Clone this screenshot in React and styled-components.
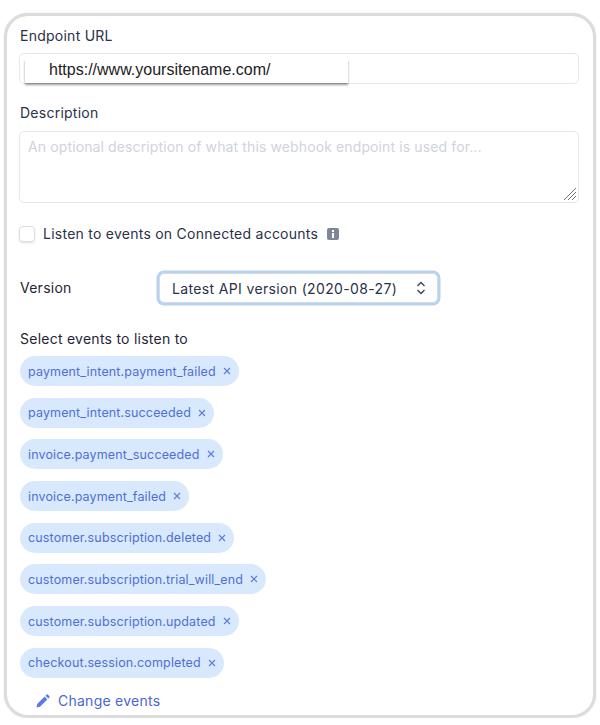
import React from "react";
import styled, { createGlobalStyle } from "styled-components";

const Global = createGlobalStyle`
    html, body { margin:0; padding:0; background:#fff; }
    body { font-family:"Inter", "Liberation Sans", sans-serif; color:#2a3148; }
    * { box-sizing:border-box; }
`;

const Card = styled.div`
    width:592px;
    height:705px;
    margin:13px 0 0 4px;
    padding:10px 14px 0 12px;
    border:3px solid #dcdcdc;
    border-radius:24px;
    box-shadow:0 0 2px rgba(0,0,0,0.12);
    background:#fff;
    overflow:hidden;
`;

const Label = styled.div`
    font-size:14px;
    line-height:20px;
    letter-spacing:0.25px;
    margin-left:1px;
    color:${p => p.$dark ? "#1f2636" : "#2a3148"};
`;

const UrlField = styled.div`
    position:relative;
    height:31px;
    margin-top:7px;
    border:1px solid #e6e7ea;
    border-radius:5px;
`;

const UrlMask = styled.div`
    position:absolute;
    left:5px;
    top:5px;
    width:323px;
    height:24px;
    padding-left:24px;
    background:#fff;
    box-shadow:0 2px 2px rgba(0,0,0,0.4);
    font-family:"Liberation Sans", Arial, sans-serif;
    font-size:16px;
    line-height:22px;
    color:#222;
`;

const DescLabel = styled(Label)`
    margin-top:19px;
`;

const TextArea = styled.div`
    position:relative;
    height:72px;
    margin-top:8px;
    padding:5px 8px;
    border:1px solid #e6e7ea;
    border-radius:5px;
    font-size:14px;
    line-height:20px;
    letter-spacing:0.12px;
    color:#d0d3dc;
`;

const Grip = styled.svg`
    position:absolute;
    right:1px;
    bottom:1px;
`;

const CheckRow = styled.div`
    display:flex;
    align-items:center;
    margin-top:22px;
    height:18px;
`;

const Box = styled.span`
    width:16px;
    height:16px;
    border:1px solid #dcdee3;
    border-radius:4px;
    box-shadow:0 1px 2px rgba(0,0,0,0.14);
    margin-right:7px;
`;

const InfoIcon = styled.svg`
    margin-left:9px;
`;

const VersionRow = styled.div`
    display:flex;
    align-items:center;
    margin-top:30px;
`;

const VersionLabel = styled(Label)`
    width:138px;
`;

const Select = styled.div`
    display:flex;
    align-items:center;
    justify-content:space-between;
    width:279px;
    height:30px;
    margin-left:1px;
    padding:0 11px 0 12px;
    border-radius:5px;
    background:#fff;
    border:1px solid #d4dbe6;
    box-shadow:0 0 0 2.5px #b5d2ee;
    font-size:14px;
    letter-spacing:0.35px;
    color:#2a3148;
`;

const EventsLabel = styled(Label)`
    margin-top:26px;
`;

const Pills = styled.div`
    display:flex;
    flex-direction:column;
    align-items:flex-start;
    gap:11.7px;
    margin:7px 0 0 1px;
`;

const Pill = styled.div`
    display:flex;
    align-items:center;
    height:30px;
    padding:0 8px;
    border-radius:15px;
    background:#d9e9fd;
    color:#4f6fd6;
    font-size:12.5px;
    letter-spacing:0.14px;
`;

const Close = styled.svg`
    margin-left:7px;
`;

const ChangeLink = styled.div`
    display:flex;
    align-items:center;
    margin:13px 0 0 17px;
    height:20px;
    font-size:14px;
    letter-spacing:0.25px;
    color:#4a66d4;
`;

const PencilIcon = styled.svg`
    margin-right:8px;
`;

const events = [
    "payment_intent.payment_failed",
    "payment_intent.succeeded",
    "invoice.payment_succeeded",
    "invoice.payment_failed",
    "customer.subscription.deleted",
    "customer.subscription.trial_will_end",
    "customer.subscription.updated",
    "checkout.session.completed",
];

export default function App() {
    return (
        <>
            <Global />
            <Card>
                <Label>Endpoint URL</Label>
                <UrlField>
                    <UrlMask>https://www.yoursitename.com/</UrlMask>
                </UrlField>
                <DescLabel>Description</DescLabel>
                <TextArea>
                    An optional description of what this webhook endpoint is used for...
                    <Grip width="14" height="14" viewBox="0 0 14 14" stroke="#777" strokeWidth="1">
                        <path d="M13 1 1 13M13 5 5 13M13 9 9 13" />
                    </Grip>
                </TextArea>
                <CheckRow>
                    <Box />
                    <Label>Listen to events on Connected accounts</Label>
                    <InfoIcon width="12" height="12" viewBox="0 0 12 12">
                        <rect width="12" height="12" rx="2" fill="#7f8698" />
                        <rect x="5" y="5" width="2" height="5" fill="#fff" />
                        <rect x="5" y="2" width="2" height="2" fill="#fff" />
                    </InfoIcon>
                </CheckRow>
                <VersionRow>
                    <VersionLabel $dark>Version</VersionLabel>
                    <Select>
                        Latest API version (2020-08-27)
                        <svg width="10" height="14" viewBox="0 0 10 14" fill="none" stroke="#3c4257" strokeWidth="1.4">
                            <path d="M1.5 5 5 1.5 8.5 5M1.5 9 5 12.5 8.5 9" />
                        </svg>
                    </Select>
                </VersionRow>
                <EventsLabel $dark>Select events to listen to</EventsLabel>
                <Pills>
                    {events.map(name => (
                        <Pill key={name}>
                            {name}
                            <Close width="8" height="8" viewBox="0 0 8 8" stroke="#5f7bd8" strokeWidth="1.1">
                                <path d="M1 1 7 7M7 1 1 7" />
                            </Close>
                        </Pill>
                    ))}
                </Pills>
                <ChangeLink>
                    <PencilIcon width="14" height="14" viewBox="0 0 14 14" fill="#5b7ce0">
                        <path d="M0.5 13.5 1.2 10 8.6 2.6 11.4 5.4 4 12.8ZM9.5 1.7 10.6 0.6Q11.2 0 11.8 0.6L13.4 2.2Q14 2.8 13.4 3.4L12.3 4.5Z" />
                    </PencilIcon>
                    Change events
                </ChangeLink>
            </Card>
        </>
    );
}
